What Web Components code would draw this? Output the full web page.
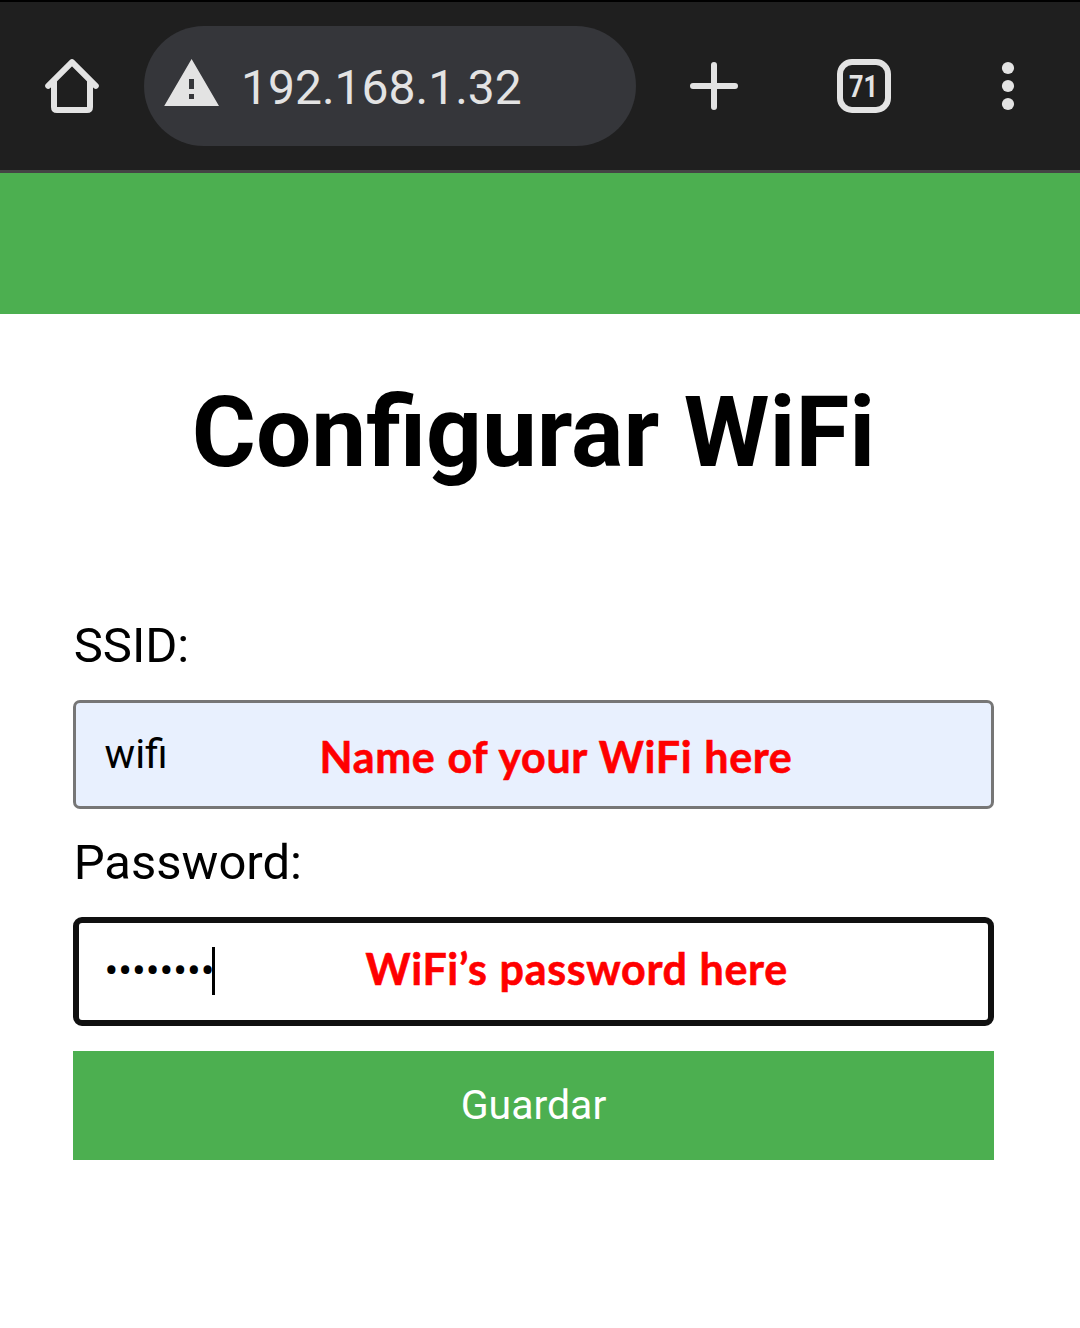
<!DOCTYPE html>
<html lang="es">
<head>
<meta charset="utf-8">
<title>Configurar WiFi</title>
<style>
html,body{margin:0;background:#fff}
body{width:1080px;height:1328px;overflow:hidden;font-family:Roboto,"Liberation Sans",sans-serif;color:#000}
</style>
</head>
<body>
<wifi-page></wifi-page>
<script>
const define=(name,html)=>{
  const t=document.createElement('template');
  t.innerHTML=html;
  customElements.define(name,class extends HTMLElement{
    constructor(){super();this.attachShadow({mode:'open'}).append(t.content.cloneNode(true));}
  });
};

define('address-pill',`
<style>
:host{display:flex;align-items:center;box-sizing:border-box;width:492px;height:120px;border-radius:60px;background:#35363a;padding-left:20px;color:#e3e3e3;font-size:48px;line-height:56px}
svg{display:block;width:56px;height:48px;margin-top:-8px}
span{margin-left:21px;padding-top:4px}
</style>
<svg viewBox="0 0 56 48"><path fill="#e3e3e3" fill-rule="evenodd" d="M27.6 1 55 48H0.2ZM25 21v10h5v-10ZM25 36v5h5v-5Z"/></svg>
<span><slot></slot></span>`);

define('tab-count',`
<style>
:host{display:flex;align-items:center;justify-content:center;box-sizing:border-box;width:54px;height:54px;border:6px solid #e3e3e3;border-radius:15px;color:#e3e3e3}
svg{display:block;width:42px;height:42px}
text{font:700 30.5px Roboto,sans-serif;fill:#e3e3e3}
</style>
<svg viewBox="0 0 42 42"><text x="6" y="32" textLength="29" lengthAdjust="spacingAndGlyphs">71</text></svg>`);

define('browser-bar',`
<style>
:host{display:flex;align-items:center;box-sizing:border-box;height:173px;background:#1f1f1f;border-top:2px solid #000;border-bottom:3px solid #444;padding-left:42px}
svg{display:block;width:60px;height:60px}
address-pill{margin-left:42px}
.plus{margin-left:48px}
tab-count{margin-left:93px}
.dots{margin-left:87px}
</style>
<svg viewBox="0 0 60 60" fill="none" stroke="#e3e3e3" stroke-width="6" stroke-linecap="round" stroke-linejoin="round"><path d="M6.2 29.8 30 6.2 53.8 29.8"/><path d="M12 25V51q0 3 3 3H45q3 0 3-3V25" stroke-linecap="butt"/></svg>
<address-pill>192.168.1.32</address-pill>
<svg class="plus" viewBox="0 0 60 60" stroke="#e3e3e3" stroke-width="6" stroke-linecap="round"><path d="M9 30H51M30 9V51"/></svg>
<tab-count></tab-count>
<svg class="dots" viewBox="0 0 60 60" fill="#e3e3e3"><circle cx="30" cy="12" r="6.1"/><circle cx="30" cy="30" r="6.1"/><circle cx="30" cy="48" r="6.1"/></svg>`);

define('red-note',`
<style>
:host{display:block;font:700 43px/56px Lato,"Open Sans",sans-serif;color:#f00;white-space:nowrap;letter-spacing:.65px;word-spacing:.9px;-webkit-text-stroke:.6px #f00}
</style><slot></slot>`);

define('form-field',`
<style>
:host{display:block}
label{display:block;font-size:49px;line-height:58px;padding-left:.7px}
.box{display:grid;align-items:center;box-sizing:border-box;width:921px;height:109px;margin-top:25px;border:3px solid #767676;border-radius:7px;background:#e8f0fe;padding-left:28.5px;font-size:40.8px;line-height:48px}
:host([focused]) .box{border:6px solid #101010;border-radius:9px;background:#fff;padding-left:25.5px}
.value,.note{grid-area:1/1}
.value{display:flex;align-items:center;height:48px;margin-top:-2px}
:host([focused]) .value::after{content:"";width:3px;height:48px;background:#000;margin-left:-3px}
</style>
<label><slot name="label"></slot></label>
<div class="box"><div class="value"><slot name="value"></slot></div><div class="note"><slot></slot></div></div>`);

define('save-button',`
<style>
:host{display:flex;align-items:center;justify-content:center;box-sizing:border-box;width:921px;height:109px;padding-bottom:2px;background:#4caf50;color:#fff;font-size:41px;line-height:48px}
</style><slot></slot>`);

define('wifi-page',`
<style>
:host{display:flex;flex-direction:column}
header{height:141px;background:#4caf50}
main{display:flex;flex-direction:column;width:921px;margin-left:73px}
h1{margin:69px 0 134px;font-size:98px;line-height:100px;font-weight:700;text-align:center;white-space:nowrap}
.pass{margin-top:25px}
.pass red-note{margin-left:261px;margin-top:-6px}
.ssid red-note{margin-left:215px;padding-top:4px}
save-button{margin-top:25px}
</style>
<browser-bar></browser-bar>
<header></header>
<main>
<h1>Configurar WiFi</h1>
<form-field class="ssid"><span slot="label">SSID:</span><span slot="value">wifi</span><red-note>Name of your WiFi here</red-note></form-field>
<form-field class="pass" focused><span slot="label">Password:</span><span slot="value">••••••••</span><red-note>WiFi’s password here</red-note></form-field>
<save-button>Guardar</save-button>
</main>`);
</script>
</body>
</html>
